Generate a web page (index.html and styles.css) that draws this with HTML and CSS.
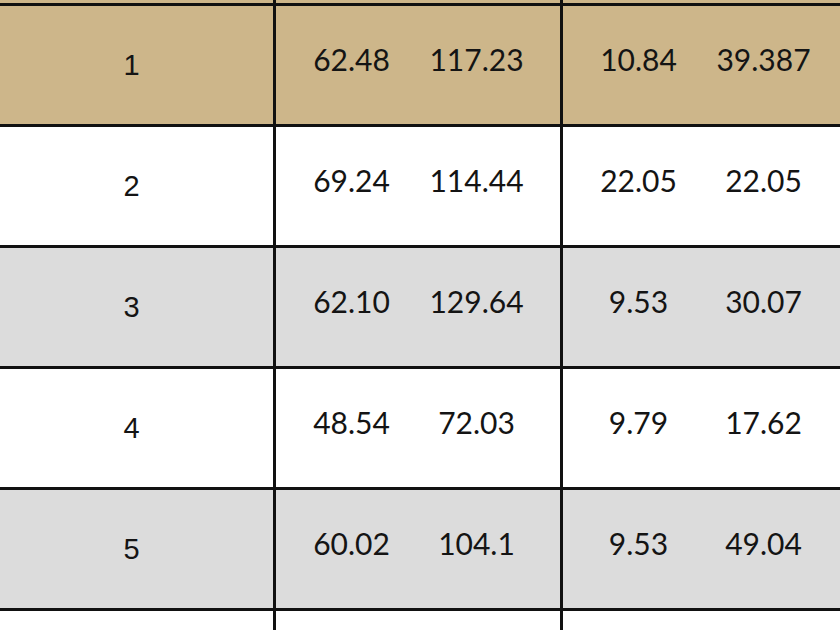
FILE: index.html
```html
<!DOCTYPE html>
<html>
<head>
<meta charset="utf-8">
<link rel="stylesheet" href="styles.css">
</head>
<body>
<div class="table">
  <div class="row stub tan"><div class="c1"></div><div class="c2"></div><div class="c3"></div></div>
  <div class="row tan">
    <div class="c1">1</div>
    <div class="c2"><span>62.48</span><span>117.23</span></div>
    <div class="c3"><span>10.84</span><span>39.387</span></div>
  </div>
  <div class="row">
    <div class="c1">2</div>
    <div class="c2"><span>69.24</span><span>114.44</span></div>
    <div class="c3"><span>22.05</span><span>22.05</span></div>
  </div>
  <div class="row grey">
    <div class="c1">3</div>
    <div class="c2"><span>62.10</span><span>129.64</span></div>
    <div class="c3"><span>9.53</span><span>30.07</span></div>
  </div>
  <div class="row">
    <div class="c1">4</div>
    <div class="c2"><span>48.54</span><span>72.03</span></div>
    <div class="c3"><span>9.79</span><span>17.62</span></div>
  </div>
  <div class="row grey">
    <div class="c1">5</div>
    <div class="c2"><span>60.02</span><span>104.1</span></div>
    <div class="c3"><span>9.53</span><span>49.04</span></div>
  </div>
  <div class="row">
    <div class="c1"></div>
    <div class="c2"></div>
    <div class="c3"></div>
  </div>
</div>
</body>
</html>
```
FILE: styles.css
```css
html, body {
  margin: 0;
  padding: 0;
  background: #ffffff;
  overflow: hidden;
}
.table {
  width: 840px;
  height: 630px;
  overflow: hidden;
  color: #141414;
}
.row {
  display: grid;
  grid-template-columns: 273px 287px 1fr;
  height: 118px;
  border-top: 3px solid #111111;
  background: #ffffff;
}
.row.stub {
  height: 3px;
  border-top: none;
}
.row.tan { background: #cdb68a; }
.row.grey { background: #dcdcdc; }
.c1 {
  display: flex;
  align-items: center;
  justify-content: center;
  padding-right: 10px;
  font-family: "Liberation Sans", Arial, sans-serif;
  font-size: 29px;
}
.c2, .c3 {
  border-left: 3px solid #111111;
  display: grid;
  grid-template-columns: 125px 125px;
  padding-left: 13px;
  align-items: center;
  padding-bottom: 12px;
  font-family: Lato, "Noto Sans", sans-serif;
  font-size: 30px;
}
.c2 span, .c3 span {
  text-align: center;
}
```
